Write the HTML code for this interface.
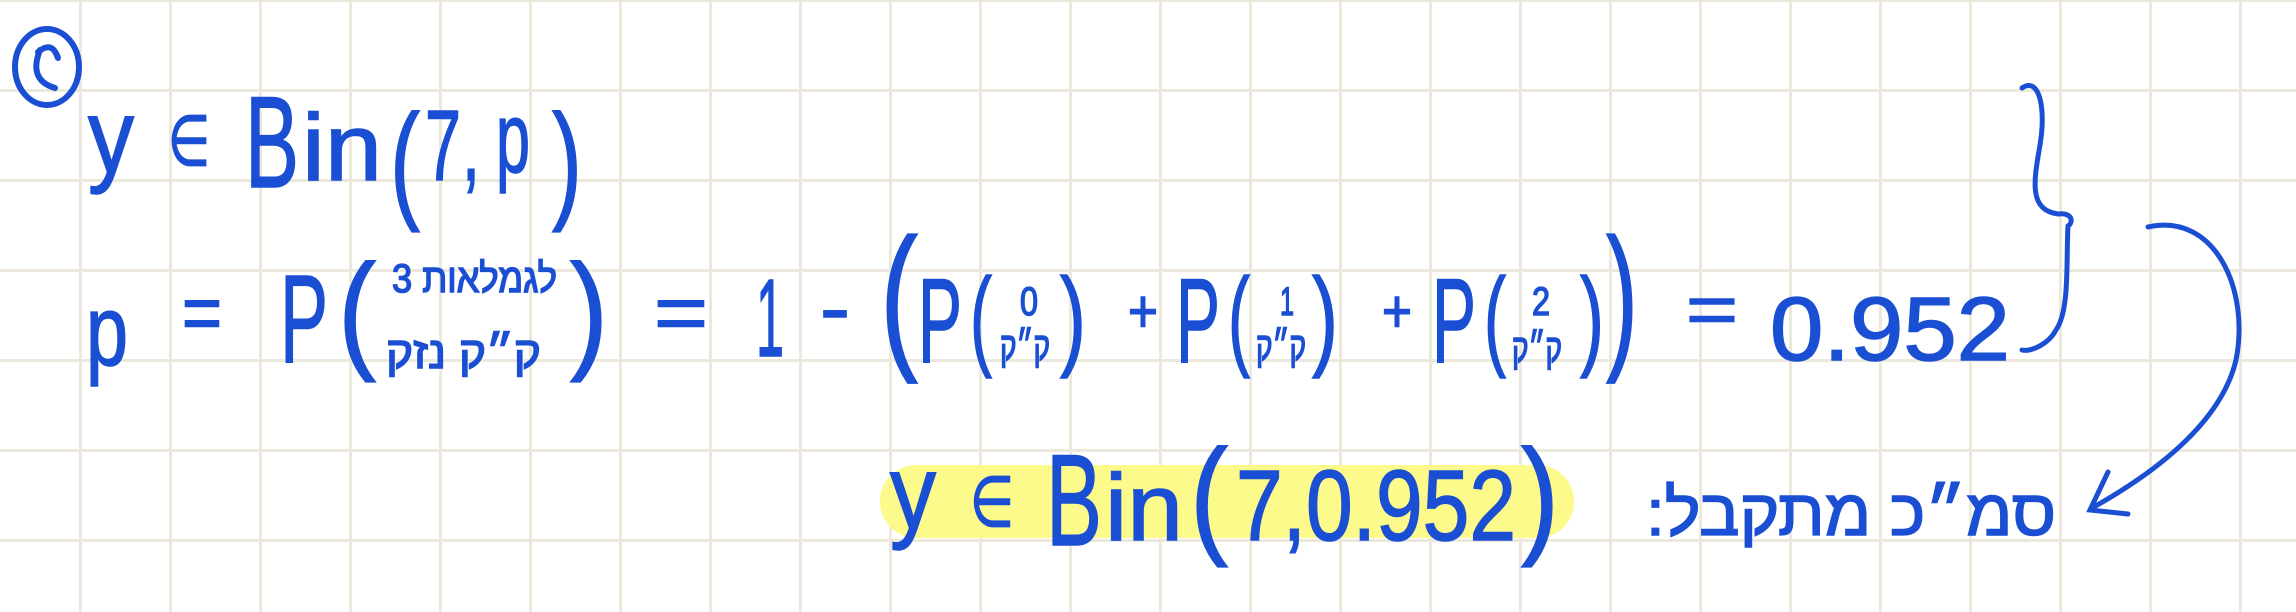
<!DOCTYPE html>
<html><head><meta charset="utf-8"><style>
html,body{margin:0;padding:0}
body{width:2296px;height:612px;overflow:hidden;background-color:#fff;
background-image:linear-gradient(to right,#ece9dc 0,#ece9dc 3px,transparent 3px),linear-gradient(to bottom,#ece9dc 0,#ece9dc 3px,transparent 3px);
background-size:90px 90px;background-position:79px 0,0 -1px;}
svg{position:absolute;left:0;top:0}
text{font-family:"Liberation Sans","DejaVu Sans",sans-serif;fill:#1a4fd3;stroke:#1a4fd3;stroke-width:1.5}
</style></head><body>
<svg width="2296" height="612" viewBox="0 0 2296 612">
<g fill="none" stroke="#1a4fd3" stroke-linecap="round" stroke-width="6">
<ellipse cx="47" cy="67" rx="32" ry="38"/>
<path d="M38,52 Q52,40 58,58 M40,50 Q28,80 55,88"/>
<path d="M2022,88 C2040,76 2046,110 2040,145 C2034,180 2028,210 2058,214 C2072,212 2074,222 2068,226 C2066,260 2070,310 2056,330 C2048,345 2030,352 2022,350" stroke-width="5"/>
<path d="M2148,227 C2215,212 2250,290 2236,360 C2222,420 2160,470 2092,508" stroke-width="5"/>
<path d="M2108,472 L2090,510 L2128,514" stroke-width="5"/>
</g>
<rect x="880" y="465" width="694" height="73" rx="36" fill="#fdfa8c"/>
<!-- line 1 -->
<text x="88" y="172" font-size="105" textLength="46" lengthAdjust="spacingAndGlyphs">y</text>
<text x="168" y="165" font-size="70" textLength="42" lengthAdjust="spacingAndGlyphs">∈</text>
<text x="245" y="187" font-size="130" textLength="54" lengthAdjust="spacingAndGlyphs">B</text>
<text x="302" y="180" font-size="95" textLength="80" lengthAdjust="spacingAndGlyphs">in</text>
<text x="390" y="205" font-size="130" textLength="30" lengthAdjust="spacingAndGlyphs">(</text>
<text x="425" y="180" font-size="100" textLength="36" lengthAdjust="spacingAndGlyphs">7</text>
<text x="462" y="180" font-size="100" textLength="18" lengthAdjust="spacingAndGlyphs">,</text>
<text x="496" y="172" font-size="100" textLength="34" lengthAdjust="spacingAndGlyphs">p</text>
<text x="552" y="205" font-size="130" textLength="30" lengthAdjust="spacingAndGlyphs">)</text>
<!-- line 2 -->
<text x="86" y="365" font-size="100" textLength="42" lengthAdjust="spacingAndGlyphs">p</text>
<text x="182" y="340" font-size="80" textLength="40" lengthAdjust="spacingAndGlyphs">=</text>
<text x="280" y="362" font-size="125" textLength="48" lengthAdjust="spacingAndGlyphs">P</text>
<text x="338" y="355" font-size="130" textLength="38" lengthAdjust="spacingAndGlyphs">(</text>
<text x="392" y="292" font-size="40" textLength="165" lengthAdjust="spacingAndGlyphs">3 לגמלאות</text>
<text x="386" y="368" font-size="45" textLength="155" lengthAdjust="spacingAndGlyphs">ק״ק נזק</text>
<text x="570" y="355" font-size="130" textLength="38" lengthAdjust="spacingAndGlyphs">)</text>
<text x="654" y="340" font-size="80" textLength="54" lengthAdjust="spacingAndGlyphs">=</text>
<text x="756" y="356" font-size="110" textLength="28" lengthAdjust="spacingAndGlyphs">1</text>
<text x="820" y="335" font-size="80" textLength="30" lengthAdjust="spacingAndGlyphs">-</text>
<text x="880" y="350" font-size="160" textLength="38" lengthAdjust="spacingAndGlyphs">(</text>
<text x="918" y="362" font-size="120" textLength="44" lengthAdjust="spacingAndGlyphs">P</text>
<text x="970" y="355" font-size="110" textLength="22" lengthAdjust="spacingAndGlyphs">(</text>
<text x="1020" y="315" font-size="40" textLength="18" lengthAdjust="spacingAndGlyphs">0</text>
<text x="1000" y="360" font-size="40" textLength="50" lengthAdjust="spacingAndGlyphs">ק״ק</text>
<text x="1060" y="355" font-size="110" textLength="26" lengthAdjust="spacingAndGlyphs">)</text>
<text x="1128" y="332" font-size="60" textLength="30" lengthAdjust="spacingAndGlyphs">+</text>
<text x="1176" y="362" font-size="120" textLength="44" lengthAdjust="spacingAndGlyphs">P</text>
<text x="1228" y="355" font-size="110" textLength="22" lengthAdjust="spacingAndGlyphs">(</text>
<text x="1280" y="315" font-size="40" textLength="14" lengthAdjust="spacingAndGlyphs">1</text>
<text x="1256" y="360" font-size="40" textLength="50" lengthAdjust="spacingAndGlyphs">ק״ק</text>
<text x="1312" y="355" font-size="110" textLength="26" lengthAdjust="spacingAndGlyphs">)</text>
<text x="1382" y="332" font-size="60" textLength="30" lengthAdjust="spacingAndGlyphs">+</text>
<text x="1432" y="362" font-size="120" textLength="44" lengthAdjust="spacingAndGlyphs">P</text>
<text x="1484" y="355" font-size="110" textLength="22" lengthAdjust="spacingAndGlyphs">(</text>
<text x="1532" y="315" font-size="40" textLength="18" lengthAdjust="spacingAndGlyphs">2</text>
<text x="1512" y="362" font-size="40" textLength="50" lengthAdjust="spacingAndGlyphs">ק״ק</text>
<text x="1580" y="355" font-size="110" textLength="24" lengthAdjust="spacingAndGlyphs">)</text>
<text x="1606" y="350" font-size="160" textLength="32" lengthAdjust="spacingAndGlyphs">)</text>
<text x="1686" y="333" font-size="70" textLength="52" lengthAdjust="spacingAndGlyphs">=</text>
<text x="1770" y="360" font-size="90" textLength="240" lengthAdjust="spacingAndGlyphs">0.952</text>
<!-- line 3 -->
<text x="890" y="528" font-size="105" textLength="46" lengthAdjust="spacingAndGlyphs">y</text>
<text x="970" y="526" font-size="70" textLength="44" lengthAdjust="spacingAndGlyphs">∈</text>
<text x="1046" y="545" font-size="130" textLength="56" lengthAdjust="spacingAndGlyphs">B</text>
<text x="1105" y="540" font-size="95" textLength="78" lengthAdjust="spacingAndGlyphs">in</text>
<text x="1190" y="540" font-size="130" textLength="38" lengthAdjust="spacingAndGlyphs">(</text>
<text x="1236" y="540" font-size="100" textLength="280" lengthAdjust="spacingAndGlyphs">7,0.952</text>
<text x="1521" y="540" font-size="130" textLength="38" lengthAdjust="spacingAndGlyphs">)</text>
<text x="1646" y="535" font-size="65" textLength="410" lengthAdjust="spacingAndGlyphs" direction="ltr" unicode-bidi="bidi-override">:לבקתמ כ״מס</text>
</svg>
</body></html>
